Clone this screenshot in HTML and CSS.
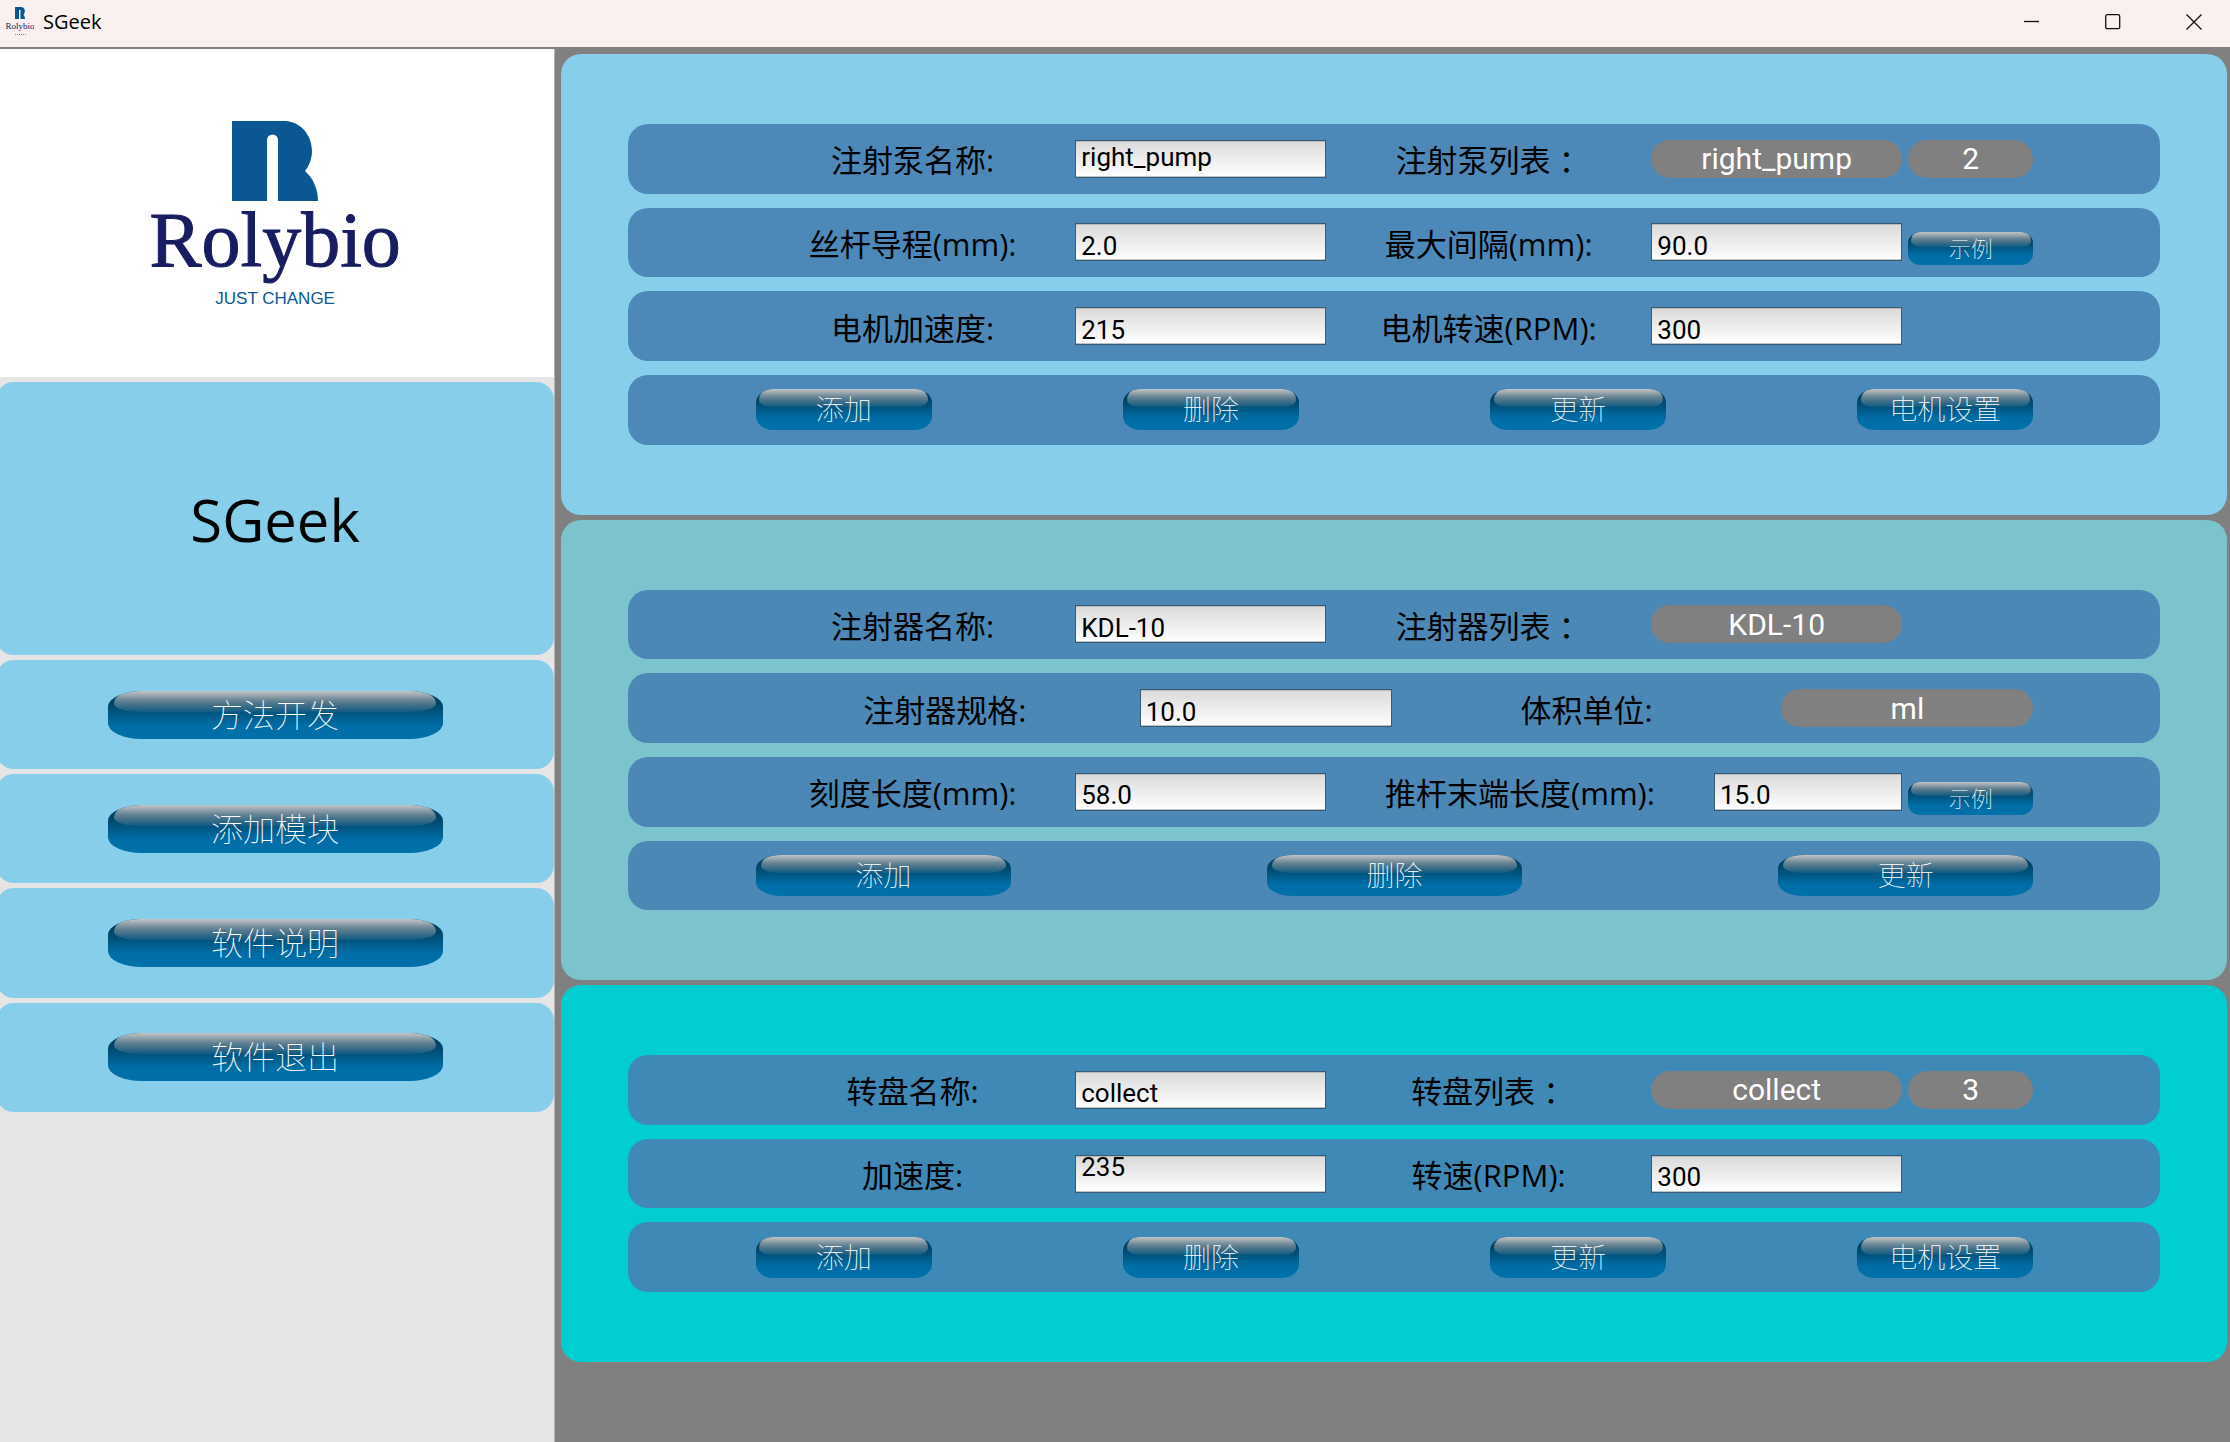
FILE: index.html
```html
<!DOCTYPE html>
<html lang="zh-CN">
<head>
<meta charset="utf-8">
<title>SGeek</title>
<link rel="stylesheet" href="styles.css">
</head>
<body>
<header class="titlebar">
  <svg class="app-icon" viewBox="0 0 28 30" aria-hidden="true">
    <path fill="#0b5794" d="M9 0h6c4 0 5 5 2.500 7.500c1 1.500 1.500 3 1.500 4.500h-4.500V3h-1.500v9h-4z"/>
    <text x="14" y="22" text-anchor="middle" class="icon-name">Rolybio</text>
    <path stroke="#0b5794" stroke-opacity=".6" stroke-dasharray="1 1" d="M9 27.500h11"/>
  </svg>
  <span class="app-name">SGeek</span>
  <div class="window-controls">
    <button type="button" aria-label="最小化"><svg viewBox="0 0 16 16"><path d="M0 7.500h15"/></svg></button>
    <button type="button" aria-label="最大化"><svg viewBox="0 0 16 16"><rect x=".7" y=".7" width="14" height="14" rx="1.500"/></svg></button>
    <button type="button" aria-label="关闭"><svg viewBox="0 0 16 16"><path d="M.5.5l15 15M15.500.5l-15 15"/></svg></button>
  </div>
</header>
<div class="workspace">
  <aside class="sidebar">
    <div class="logo">
      <svg class="logo-mark" viewBox="0 0 86 80" aria-hidden="true"><path fill="#0b5794" d="M0 0H53C70 1 80 15 80 30C80 38 77 45 73 50C82 58 86 69 86 80H46V19A5.500 5.500 0 0 0 35 19V80H0Z"/></svg>
      <span class="wordmark">Rolybio</span>
      <span class="tagline">JUST CHANGE</span>
    </div>
    <div class="card"><h1>SGeek</h1></div>
    <div class="card"><button type="button" class="glossy nav">方法开发</button></div>
    <div class="card"><button type="button" class="glossy nav">添加模块</button></div>
    <div class="card"><button type="button" class="glossy nav">软件说明</button></div>
    <div class="card"><button type="button" class="glossy nav">软件退出</button></div>
  </aside>
  <main class="panels">
    <section class="panel pump">
      <div class="row fields">
        <label for="pump-name">注射泵名称:</label>
        <input id="pump-name" class="raised" type="text" value="right_pump">
        <label for="pump-list">注射泵列表<span class="colon">：</span></label>
        <select id="pump-list"><option>right_pump</option></select>
        <select aria-label="注射泵编号"><option>2</option></select>
      </div>
      <div class="row fields">
        <label for="lead">丝杆导程(mm):</label>
        <input id="lead" type="text" value="2.0">
        <label for="max-gap">最大间隔(mm):</label>
        <input id="max-gap" type="text" value="90.0">
        <button type="button" class="glossy example">示例</button>
      </div>
      <div class="row fields">
        <label for="pump-acc">电机加速度:</label>
        <input id="pump-acc" type="text" value="215">
        <label for="pump-rpm">电机转速(RPM):</label>
        <input id="pump-rpm" type="text" value="300">
      </div>
      <div class="row actions">
        <button type="button" class="glossy">添加</button>
        <button type="button" class="glossy">删除</button>
        <button type="button" class="glossy">更新</button>
        <button type="button" class="glossy">电机设置</button>
      </div>
    </section>
    <section class="panel syringe">
      <div class="row fields">
        <label for="syringe-name">注射器名称:</label>
        <input id="syringe-name" type="text" value="KDL-10">
        <label for="syringe-list">注射器列表<span class="colon">：</span></label>
        <select id="syringe-list"><option>KDL-10</option></select>
      </div>
      <div class="row fields four">
        <label for="volume">注射器规格:</label>
        <input id="volume" type="text" value="10.0">
        <label for="unit">体积单位:</label>
        <select id="unit"><option>ml</option></select>
      </div>
      <div class="row fields wide-label">
        <label for="scale">刻度长度(mm):</label>
        <input id="scale" type="text" value="58.0">
        <label for="rod-end">推杆末端长度(mm):</label>
        <input id="rod-end" type="text" value="15.0">
        <button type="button" class="glossy example">示例</button>
      </div>
      <div class="row actions three">
        <button type="button" class="glossy">添加</button>
        <button type="button" class="glossy">删除</button>
        <button type="button" class="glossy">更新</button>
      </div>
    </section>
    <section class="panel turntable">
      <div class="row fields">
        <label for="table-name">转盘名称:</label>
        <input id="table-name" type="text" value="collect">
        <label for="table-list">转盘列表<span class="colon">：</span></label>
        <select id="table-list"><option>collect</option></select>
        <select aria-label="转盘编号"><option>3</option></select>
      </div>
      <div class="row fields">
        <label for="table-acc">加速度:</label>
        <input id="table-acc" class="top" type="text" value="235">
        <label for="table-rpm">转速(RPM):</label>
        <input id="table-rpm" type="text" value="300">
      </div>
      <div class="row actions">
        <button type="button" class="glossy">添加</button>
        <button type="button" class="glossy">删除</button>
        <button type="button" class="glossy">更新</button>
        <button type="button" class="glossy">电机设置</button>
      </div>
    </section>
  </main>
</div>
</body>
</html>
```
FILE: styles.css
```css
* { box-sizing: border-box; }

body {
  margin: 0;
  min-height: 100vh;
  display: flex;
  flex-direction: column;
  background: #808080;
  color: #000;
  font-family: "Open Sans", "Noto Sans CJK SC", sans-serif;
}

button, input, select { margin: 0; font: inherit; }

/* Title bar */
.titlebar {
  display: flex;
  align-items: center;
  height: 47px;
  padding: 0 13px 4px 6px;
  background: #f9f0ef;
}
.app-icon { width: 28px; height: 30px; }
.icon-name { font: 9px "Liberation Serif", serif; fill: #181c60; }
.app-name { margin-left: 9px; padding-top: 1px; font-size: 20px; line-height: 28px; }
.window-controls { display: flex; gap: 35px; margin-left: auto; }
.window-controls button {
  display: grid;
  place-items: center;
  width: 46px;
  height: 43px;
  padding: 0;
  border: 0;
  background: none;
}
.window-controls svg {
  width: 16px;
  height: 16px;
  fill: none;
  stroke: #111;
  stroke-width: 1.3;
}

/* Two columns */
.workspace {
  flex: 1;
  display: grid;
  grid-template-columns: 1fr 3fr;
  gap: 6px;
  padding-right: 3px;
}

.sidebar {
  display: grid;
  grid-template-rows: 6fr 5fr repeat(4, 2fr);
  gap: 5px;
  margin-top: 2px;
  padding-bottom: 330px;
  border-right: 1px solid #b4b4b4;
  background: #e5e5e5;
}
.logo {
  display: flex;
  flex-direction: column;
  align-items: center;
  justify-content: center;
  padding: 4px 4px 0 0;
  background: #fff;
}
.logo-mark { width: 86px; height: 80px; }
.wordmark {
  font: 78px/78px "Liberation Serif", serif;
  color: #181c60;
  -webkit-text-stroke: 1px #181c60;
}
.tagline {
  margin-top: 10px;
  font: 17px/20px "Liberation Sans", sans-serif;
  color: #0b5794;
}
.card {
  display: grid;
  place-items: center;
  margin-left: -4px;
  border-radius: 18px;
  background: #87ceeb;
}
.card h1 {
  margin: 0;
  padding-top: 4px;
  font-size: 58px;
  font-weight: 400;
  line-height: 80px;
}

/* Glossy buttons */
.glossy {
  position: relative;
  isolation: isolate;
  height: 41px;
  padding: 0 0 3px;
  border: 0;
  border-radius: 10% / 33%;
  overflow: hidden;
  background: linear-gradient(#003a58, #004468 25%, #005580 45%, #006ea6 72%, #0071aa);
  color: #fff;
  font-family: "Noto Sans CJK SC", sans-serif;
  font-size: 28px;
  font-weight: 100;
  line-height: 38px;
}
.glossy::before {
  content: "";
  position: absolute;
  inset: 0 2% 56%;
  border-radius: 6% 6% 8% 8% / 60% 60% 40% 40%;
  background: linear-gradient(rgba(205, 205, 205, .95), rgba(170, 175, 180, .6) 45%, rgba(150, 165, 180, .1));
  z-index: -1;
}
.glossy.nav {
  width: 60%;
  height: 48px;
  font-size: 32px;
  line-height: 45px;
}
.glossy.example {
  align-self: end;
  height: 33px;
  margin-bottom: 12px;
  font-size: 22px;
  line-height: 30px;
}

/* Device panels */
.panels {
  display: grid;
  grid-template-rows: 11fr 11fr 9fr;
  gap: 5px;
  padding: 7px 0 80px;
}
.panel {
  display: grid;
  grid-auto-rows: 1fr;
  gap: 14px;
  padding: 70px 4%;
  border-radius: 20px;
}
.pump { background: #87ceeb; }
.syringe { background: #7cc4cd; }
.turntable { background: #00ced1; }

.row {
  align-items: center;
  padding: 0 127px 0 128px;
  border-radius: 20px;
  background: rgba(70, 130, 180, .9);
}
.fields {
  display: grid;
  grid-template-columns: 5fr 4fr 5fr 4fr 2fr;
  column-gap: 6px;
}
.fields.four { grid-template-columns: 6fr 4fr 6fr 4fr; }
.fields.wide-label { grid-template-columns: 5fr 4fr 6fr 3fr 2fr; }
.actions { display: flex; justify-content: space-between; }
.actions .glossy { width: 176px; }
.actions.three .glossy { width: 255px; }

label {
  padding-top: 3px;
  font-size: 31px;
  line-height: 40px;
  text-align: center;
  white-space: nowrap;
}
.colon { padding-left: 8px; margin-right: -8px; }

input {
  width: 100%;
  min-width: 0;
  height: 38px;
  padding: 7px 5px 0;
  border: 1px solid #3a5a72;
  border-radius: 0;
  background: linear-gradient(#dadada, #fff);
  box-shadow: inset 0 -1px #b8c4c8, inset 0 1px #b4bcc2;
  color: #000;
  font-family: Roboto, sans-serif;
  font-size: 26px;
}
input.raised { padding: 0 5px 4px; }
input.top { padding: 0 5px 14px; }

select {
  width: 100%;
  min-width: 0;
  height: 38px;
  padding: 0;
  border: 0;
  border-radius: 20px;
  appearance: none;
  background: #808080;
  color: #fff;
  font-family: Roboto, sans-serif;
  font-size: 30px;
  text-align: center;
  text-align-last: center;
}
```
